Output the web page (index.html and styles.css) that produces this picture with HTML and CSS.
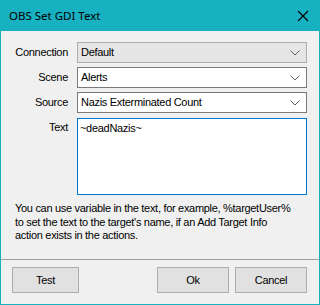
FILE: index.html
```html
<!DOCTYPE html>
<html>
<head>
<meta charset="utf-8">
<link rel="stylesheet" href="styles.css">
</head>
<body>
<div class="window">
  <div class="titlebar">
    <span class="title">OBS Set GDI Text</span>
    <svg class="close" width="12" height="12" viewBox="0 0 12 12"><path d="M1 1 L11 11 M11 1 L1 11" stroke="#000" stroke-width="1.1" fill="none"/></svg>
  </div>
  <div class="content">
    <div class="form">
      <label class="lbl">Connection</label>
      <div class="combo disabled"><span>Default</span><svg class="chev" width="10" height="6" viewBox="0 0 10 6"><path d="M0.5 0.5 L5 5 L9.5 0.5" stroke="#606060" fill="none"/></svg></div>
      <label class="lbl">Scene</label>
      <div class="combo"><span>Alerts</span><svg class="chev" width="10" height="6" viewBox="0 0 10 6"><path d="M0.5 0.5 L5 5 L9.5 0.5" stroke="#606060" fill="none"/></svg></div>
      <label class="lbl">Source</label>
      <div class="combo"><span>Nazis Exterminated Count</span><svg class="chev" width="10" height="6" viewBox="0 0 10 6"><path d="M0.5 0.5 L5 5 L9.5 0.5" stroke="#606060" fill="none"/></svg></div>
      <label class="lbl top">Text</label>
      <div class="textbox">~deadNazis~</div>
    </div>
    <p class="desc">You can use variable in the text, for example, %targetUser%<br>to set the text to the target's name, if an Add Target Info<br>action exists in the actions.</p>
  </div>
  <div class="sep"></div>
  <div class="buttons">
    <div class="btn test">Test</div>
    <div class="spacer"></div>
    <div class="btn ok">Ok</div>
    <div class="btn cancel">Cancel</div>
  </div>
</div>
</body>
</html>
```
FILE: styles.css
```css
html, body {
  margin: 0;
  padding: 0;
  background: #f0f0f0;
}
.window {
  width: 320px;
  height: 305px;
  box-sizing: border-box;
  border: 1px solid #17b1c1;
  background: #f0f0f0;
  font-family: "Liberation Sans", Arial, sans-serif;
  font-size: 11px;
  letter-spacing: -0.3px;
  color: #000;
  display: flex;
  flex-direction: column;
}
.titlebar {
  height: 30px;
  background: #17b1c1;
  display: flex;
  align-items: center;
  justify-content: space-between;
  padding: 0 10px 0 8px;
  flex: none;
}
.title {
  font-family: "Noto Sans", "Liberation Sans", sans-serif;
  font-size: 11.5px;
  letter-spacing: 0;
  color: #000;
  position: relative;
  top: -1px;
}
.close {
  display: block;
}
.content {
  padding: 11px 13px 0 11px;
}
.form {
  display: grid;
  grid-template-columns: 57px 230px;
  column-gap: 8px;
  row-gap: 4px;
}
.lbl {
  text-align: right;
  line-height: 21px;
  padding-right: 1px;
}
.lbl.top {
  margin-top: 1px;
  line-height: 19px;
}
.combo {
  height: 21px;
  box-sizing: border-box;
  border: 1px solid #7a7a7a;
  background: #fff;
  display: flex;
  align-items: center;
  justify-content: space-between;
  padding: 0 6px 0 3px;
}
.combo.disabled {
  background: #e5e5e5;
  border-color: #adadad;
}
.combo span {
  line-height: 19px;
}
.chev {
  display: block;
}
.textbox {
  height: 77px;
  margin-top: 1px;
  box-sizing: border-box;
  border: 1px solid #0078d7;
  background: #fff;
  padding: 3px 2px;
  line-height: 13px;
}
.desc {
  margin: 7px 0 0 3px;
  line-height: 13.5px;
  white-space: nowrap;
}
.sep {
  height: 1px;
  background: #a0a0a0;
  margin-top: 16px;
  flex: none;
}
.buttons {
  display: flex;
  padding: 7px 12px 0 11px;
}
.btn {
  height: 26px;
  box-sizing: border-box;
  border: 1px solid #adadad;
  background: #e1e1e1;
  display: flex;
  align-items: center;
  justify-content: center;
}
.btn.test { width: 67px; }
.btn.ok { width: 72px; margin-right: 6px; }
.btn.cancel { width: 72px; }
.spacer { flex: 1; }
```
